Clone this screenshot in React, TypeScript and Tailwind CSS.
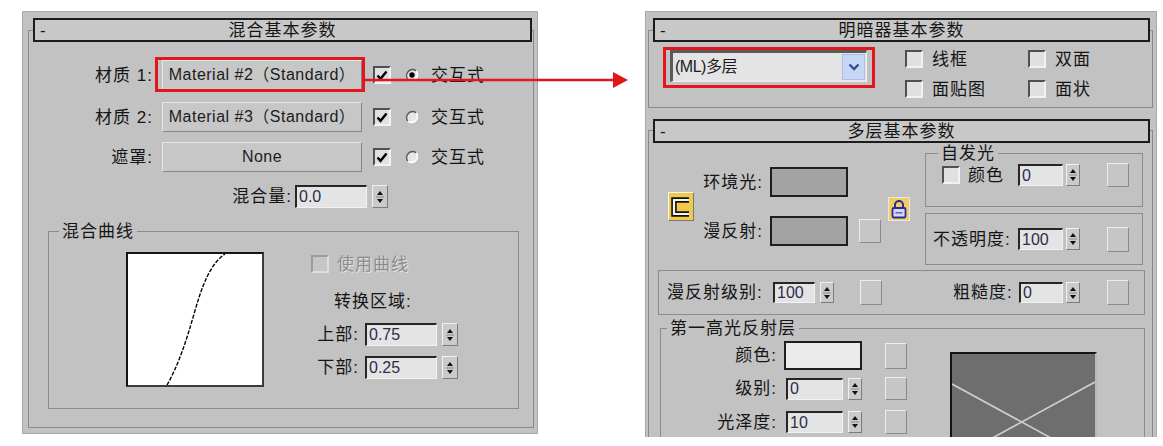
import React from "react"

// labels in the 3ds Max style rollouts
const LBL_BASE = "text-[17px] tracking-[1px] leading-none whitespace-nowrap"
const LBL = `${LBL_BASE} text-[#151515]`
const NUM = "text-[16px] leading-none text-[#2c2c4c]"

function TitleBar({ title, className = "" }: { title: string; className?: string }) {
  return (
    <div className={`h-[24px] border-2 border-[#1c1c1c] bg-[#c8c8c8] flex items-center ${LBL} ${className}`}>
      <span className="w-[26px] pl-[5px]">-</span>
      <span className="flex-1 text-center">{title}</span>
      <span className="w-[26px]" />
    </div>
  )
}

function Check({ checked = false, disabled = false }: { checked?: boolean; disabled?: boolean }) {
  return (
    <div
      className={`w-[18px] h-[18px] shrink-0 border-2 flex items-center justify-center ${
        disabled
          ? "border-t-[#9c9c9c] border-l-[#9c9c9c] border-r-[#dedede] border-b-[#dedede] bg-[#c6c6c6]"
          : "border-t-[#505050] border-l-[#505050] border-r-[#f2f2f2] border-b-[#f2f2f2] bg-[#e0e0e0]"
      }`}
    >
      {checked && (
        <svg width="12" height="11" viewBox="0 0 12 11">
          <path d="M1.5 5.5 L4.5 8.8 L10.5 1.5" stroke="#000" strokeWidth="2.4" fill="none" />
        </svg>
      )}
    </div>
  )
}

function Radio({ checked = false }: { checked?: boolean }) {
  return (
    <svg width="14" height="14" viewBox="0 0 14 14" className="shrink-0">
      <circle cx="7" cy="7" r="6" fill="#e6e6e6" />
      <path d="M2.8 11.2 A6 6 0 0 1 11.2 2.8" stroke="#5c5c5c" strokeWidth="1.6" fill="none" />
      <path d="M11.2 2.8 A6 6 0 0 1 2.8 11.2" stroke="#ffffff" strokeWidth="1.6" fill="none" />
      {checked && <circle cx="7" cy="7" r="2.7" fill="#000" />}
    </svg>
  )
}

function Field({ value, className }: { value: string; className: string }) {
  return (
    <div
      className={`bg-[#e4e4e4] border-t-2 border-l-2 border-t-[#262626] border-l-[#262626] border-r border-b border-r-[#f2f2f2] border-b-[#f2f2f2] pl-[2px] flex items-center ${NUM} ${className}`}
    >
      {value}
    </div>
  )
}

function Arrows({ className }: { className: string }) {
  return (
    <div
      className={`bg-[#cacaca] border border-t-[#f0f0f0] border-l-[#f0f0f0] border-r-[#7c7c7c] border-b-[#7c7c7c] flex items-center justify-center ${className}`}
    >
      <svg width="10" height="16" viewBox="0 0 10 16">
        <polygon points="2,6 8,6 5,2" fill="#111" />
        <line x1="1" y1="8" x2="9" y2="8" stroke="#8a8a8a" strokeWidth="1" />
        <polygon points="2,10 8,10 5,14" fill="#111" />
      </svg>
    </div>
  )
}

function SmallBtn({ className = "h-[24px]" }: { className?: string }) {
  return (
    <div
      className={`w-[22px] shrink-0 bg-[#c6c6c6] border border-t-[#ededed] border-l-[#ededed] border-r-[#8a8a8a] border-b-[#8a8a8a] ${className}`}
    />
  )
}

function MatButton({ label }: { label: string }) {
  return (
    <div className="w-[200px] h-[30px] bg-[#c7c7c7] border border-t-[#e8e8e8] border-l-[#e8e8e8] border-r-[#858585] border-b-[#858585] flex items-center justify-center text-[16px] tracking-[0.5px] leading-none text-[#1c1c1c] whitespace-nowrap">
      {label}
    </div>
  )
}

function Swatch({ className }: { className: string }) {
  return <div className={`w-[78px] border-2 border-[#1e1e1e] shrink-0 ${className}`} />
}

function LeftPanel() {
  return (
    <div className="ml-[22px] mt-[11px] w-[516px] h-[423px] shrink-0 bg-[#c2c2c2] border border-[#a9a9a9] pl-[5px] pr-[3px]">
      <div className="mt-[18px] h-[398px] border border-[#8a8a8a]">
        <TitleBar title="混合基本参数" className="-mt-[13px] ml-[4px] mr-[1px]" />

        <div className="mt-[18px] h-[30px] flex items-center">
          <span className={`w-[124px] text-right ${LBL}`}>材质 1:</span>
          <div className="relative ml-[9px]">
            <MatButton label="Material #2（Standard）" />
            <div className="absolute -left-[7px] -top-[3px] -right-[3px] -bottom-[2px] border-[3px] border-[#e3161c]" />
          </div>
          <div className="ml-[11px]">
            <Check checked />
          </div>
          <div className="ml-[14px] flex">
            <Radio checked />
          </div>
          <span className={`ml-[12px] ${LBL}`}>交互式</span>
        </div>

        <div className="mt-[12px] h-[30px] flex items-center">
          <span className={`w-[124px] text-right ${LBL}`}>材质 2:</span>
          <div className="ml-[9px]">
            <MatButton label="Material #3（Standard）" />
          </div>
          <div className="ml-[11px]">
            <Check checked />
          </div>
          <div className="ml-[14px] flex">
            <Radio />
          </div>
          <span className={`ml-[12px] ${LBL}`}>交互式</span>
        </div>

        <div className="mt-[10px] h-[30px] flex items-center">
          <span className={`w-[124px] text-right ${LBL}`}>遮罩:</span>
          <div className="ml-[9px]">
            <MatButton label="None" />
          </div>
          <div className="ml-[11px]">
            <Check checked />
          </div>
          <div className="ml-[14px] flex">
            <Radio />
          </div>
          <span className={`ml-[12px] ${LBL}`}>交互式</span>
        </div>

        <div className="mt-[13px] h-[23px] flex items-center">
          <span className={`w-[263px] text-right ${LBL}`}>混合量:</span>
          <Field value="0.0" className="ml-[3px] w-[72px] h-[23px]" />
          <Arrows className="ml-[5px] w-[16px] h-[23px]" />
        </div>

        <fieldset className="mt-[15px] ml-[19px] w-[471px] h-[186px] border border-[#8c8c8c]">
          <legend className={`ml-[10px] px-[3px] ${LBL} leading-[20px]`}>混合曲线</legend>
          <div className="flex items-start pl-[77px] pt-[12px]">
            <div className="w-[138px] h-[135px] bg-white border-2 border-t-[#141414] border-l-[#141414] border-r-[#3c3c3c] border-b-[#3c3c3c]">
              <svg width="134" height="131" viewBox="0 0 134 131">
                <path
                  d="M39 131 C50 112, 58 88, 66 60 S82 10, 97 0"
                  stroke="#000"
                  strokeWidth="1.4"
                  strokeDasharray="4 1.5"
                  fill="none"
                />
              </svg>
            </div>
            <div className="ml-[47px] flex flex-col">
              <div className="mt-[2px] h-[20px] flex items-center">
                <Check disabled />
                <span className={`ml-[8px] ${LBL_BASE} text-[#8c8c8c] [text-shadow:1px_1px_0_#e4e4e4]`}>使用曲线</span>
              </div>
              <span className={`mt-[17px] ml-[23px] h-[20px] flex items-center ${LBL}`}>转换区域:</span>
              <div className="mt-[12px] h-[23px] flex items-center">
                <span className={`w-[48px] text-right ${LBL}`}>上部:</span>
                <Field value="0.75" className="ml-[6px] w-[72px] h-[23px]" />
                <Arrows className="ml-[5px] w-[16px] h-[23px]" />
              </div>
              <div className="mt-[10px] h-[23px] flex items-center">
                <span className={`w-[48px] text-right ${LBL}`}>下部:</span>
                <Field value="0.25" className="ml-[6px] w-[72px] h-[23px]" />
                <Arrows className="ml-[5px] w-[16px] h-[23px]" />
              </div>
            </div>
          </div>
        </fieldset>
      </div>
    </div>
  )
}

function RightPanel() {
  return (
    <div className="ml-[107px] mt-[11px] w-[512px] h-[426px] shrink-0 overflow-hidden bg-[#c2c2c2] border border-b-0 border-[#a9a9a9] pl-[2px] pr-[3px]">
      {/* shader rollout */}
      <div className="mt-[18px] h-[78px] border border-[#8a8a8a]">
        <TitleBar title="明暗器基本参数" className="-mt-[13px] ml-[4px] mr-[2px]" />
        <div className="flex items-start">
          <div className="relative ml-[21px] mt-[8px]">
            <div className="w-[197px] h-[32px] bg-[#e4e4e4] border-t-[3px] border-l-[3px] border-t-[#5a5a5a] border-l-[#5a5a5a] border-r border-b border-r-[#f0f0f0] border-b-[#f0f0f0] flex items-center pl-[2px]">
              <span className="text-[16px] leading-none text-[#1a1a1a] tracking-[-0.5px]">(ML)多层</span>
              <div className="ml-auto mr-[1px] w-[23px] h-[26px] bg-[#c8d6f5] border border-[#aebfe6] flex items-center justify-center">
                <svg width="12" height="8" viewBox="0 0 12 8">
                  <path d="M1.5 1.5 L6 6 L10.5 1.5" stroke="#2f4f8f" strokeWidth="2.4" fill="none" />
                </svg>
              </div>
            </div>
            <div className="absolute -left-[7px] -top-[3px] -right-[8px] -bottom-[6px] border-[3px] border-[#e3161c]" />
          </div>
          <div className="ml-[38px] mt-[7px] grid grid-cols-[123px_auto] gap-y-[10px]">
            <div className="h-[20px] flex items-center gap-[9px]">
              <Check />
              <span className={LBL}>线框</span>
            </div>
            <div className="h-[20px] flex items-center gap-[9px]">
              <Check />
              <span className={LBL}>双面</span>
            </div>
            <div className="h-[20px] flex items-center gap-[9px]">
              <Check />
              <span className={LBL}>面贴图</span>
            </div>
            <div className="h-[20px] flex items-center gap-[9px]">
              <Check />
              <span className={LBL}>面状</span>
            </div>
          </div>
        </div>
      </div>

      {/* multi-layer rollout */}
      <div className="mt-[22px] h-[400px] border border-b-0 border-[#8a8a8a]">
        <TitleBar title="多层基本参数" className="-mt-[12px] ml-[4px] mr-[2px]" />

        <div className="flex items-start">
          <div className="ml-[19px] mt-[24px] flex items-center">
            <div className="w-[26px] h-[29px] border border-t-[#f6f6f6] border-l-[#f6f6f6] border-r-[#7a7a7a] border-b-[#7a7a7a] bg-[#f1c84a] flex items-center justify-center">
              <svg width="22" height="22" viewBox="0 0 22 22">
                <path d="M19 4 H4 V18 H19" stroke="#111" strokeWidth="5.5" fill="none" />
                <path d="M19 4 H4 V18 H19" stroke="#f4f4f4" strokeWidth="2.2" fill="none" />
              </svg>
            </div>
            <div className="ml-[4px] flex flex-col">
              <div className="h-[30px] flex items-center">
                <span className={`w-[65px] text-right ${LBL}`}>环境光:</span>
                <Swatch className="ml-[7px] h-[30px] bg-[#a3a3a3]" />
              </div>
              <div className="mt-[19px] h-[30px] flex items-center">
                <span className={`w-[65px] text-right ${LBL}`}>漫反射:</span>
                <Swatch className="ml-[7px] h-[30px] bg-[#a3a3a3]" />
                <SmallBtn className="ml-[11px] h-[24px]" />
              </div>
            </div>
            <div className="ml-[7px] mt-[4px] w-[22px] h-[24px] bg-[#f1cf5e] border border-[#e6e6f6] flex items-center justify-center">
              <svg width="16" height="20" viewBox="0 0 16 20">
                <path d="M4 9 V6 a4 4 0 0 1 8 0 V9" stroke="#2a2a9a" strokeWidth="2" fill="none" />
                <rect x="1.5" y="9" width="13" height="9.5" rx="1.2" fill="#d6d6f4" stroke="#2a2a9a" strokeWidth="1.8" />
                <line x1="4.5" y1="13.8" x2="11.5" y2="13.8" stroke="#5a5ab0" strokeWidth="1.4" />
              </svg>
            </div>
          </div>

          <div className="ml-[15px] mt-[2px] w-[218px] flex flex-col">
            <fieldset className="h-[62px] border border-[#8c8c8c]">
              <legend className={`ml-[12px] px-[3px] ${LBL} leading-[20px]`}>自发光</legend>
              <div className="pl-[16px] pt-[2px] h-[24px] flex items-center">
                <Check />
                <span className={`ml-[8px] w-[36px] ${LBL}`}>颜色</span>
                <Field value="0" className="ml-[14px] w-[45px] h-[22px]" />
                <Arrows className="ml-[3px] w-[14px] h-[22px]" />
                <SmallBtn className="ml-[27px] h-[24px]" />
              </div>
            </fieldset>
            <div className="mt-[6px] h-[52px] border border-[#8c8c8c] pl-[7px] flex items-center">
              <span className={`w-[85px] ${LBL}`}>不透明度:</span>
              <Field value="100" className="w-[45px] h-[22px]" />
              <Arrows className="ml-[3px] w-[14px] h-[22px]" />
              <SmallBtn className="ml-[27px] h-[25px]" />
            </div>
          </div>
        </div>

        <div className="mt-[5px] ml-[9px] w-[487px] h-[45px] border border-[#8c8c8c] pl-[8px] flex items-center">
          <span className={`w-[106px] ${LBL}`}>漫反射级别:</span>
          <Field value="100" className="w-[42px] h-[21px]" />
          <Arrows className="ml-[5px] w-[14px] h-[21px]" />
          <SmallBtn className="ml-[26px] h-[25px]" />
          <span className={`ml-[71px] w-[66px] ${LBL}`}>粗糙度:</span>
          <Field value="0" className="w-[44px] h-[21px]" />
          <Arrows className="ml-[3px] w-[14px] h-[21px]" />
          <SmallBtn className="ml-[27px] h-[25px]" />
        </div>

        <fieldset className="mt-[5px] ml-[11px] w-[485px] h-[160px] border border-[#8c8c8c]">
          <legend className={`ml-[6px] px-[3px] ${LBL} leading-[20px]`}>第一高光反射层</legend>
          <div className="flex items-start">
            <div className="flex flex-col">
              <div className="mt-[4px] h-[29px] flex items-center">
                <span className={`w-[116px] text-right ${LBL}`}>颜色:</span>
                <Swatch className="ml-[7px] h-[29px] bg-[#ebebeb]" />
                <SmallBtn className="ml-[23px] h-[26px]" />
              </div>
              <div className="mt-[7px] h-[23px] flex items-center">
                <span className={`w-[116px] text-right ${LBL}`}>级别:</span>
                <Field value="0" className="ml-[9px] w-[57px] h-[22px]" />
                <Arrows className="ml-[5px] w-[14px] h-[22px]" />
                <SmallBtn className="ml-[23px] h-[23px]" />
              </div>
              <div className="mt-[10px] h-[24px] flex items-center">
                <span className={`w-[116px] text-right ${LBL}`}>光泽度:</span>
                <Field value="10" className="ml-[9px] w-[57px] h-[22px]" />
                <Arrows className="ml-[5px] w-[14px] h-[22px]" />
                <SmallBtn className="ml-[23px] h-[24px]" />
              </div>
            </div>
            <div className="ml-[43px] mt-[15px] w-[147px] h-[120px] bg-[#6e6e6e] border-2 border-t-[#141414] border-l-[#141414] border-r-[#b8b8b8] border-b-[#b8b8b8]">
              <svg width="143" height="116" viewBox="0 0 143 116">
                <line x1="0" y1="30" x2="143" y2="108" stroke="#cfcfcf" strokeWidth="1.6" />
                <line x1="143" y1="28" x2="0" y2="106" stroke="#cfcfcf" strokeWidth="1.6" />
              </svg>
            </div>
          </div>
        </fieldset>
      </div>
    </div>
  )
}

export default function App() {
  return (
    <div className="relative w-[1163px] h-[446px] overflow-hidden bg-white flex items-start font-['Liberation_Sans','Noto_Sans_CJK_SC',sans-serif]">
      <LeftPanel />
      <RightPanel />
      {/* callout arrow from material 1 to the shader dropdown */}
      <svg width="266" height="20" viewBox="0 0 266 20" className="absolute left-[363px] top-[70px]">
        <line x1="0" y1="10" x2="252" y2="10" stroke="#e3161c" strokeWidth="2.6" />
        <polygon points="250,2 265,10 250,18" fill="#e3161c" />
      </svg>
    </div>
  )
}
